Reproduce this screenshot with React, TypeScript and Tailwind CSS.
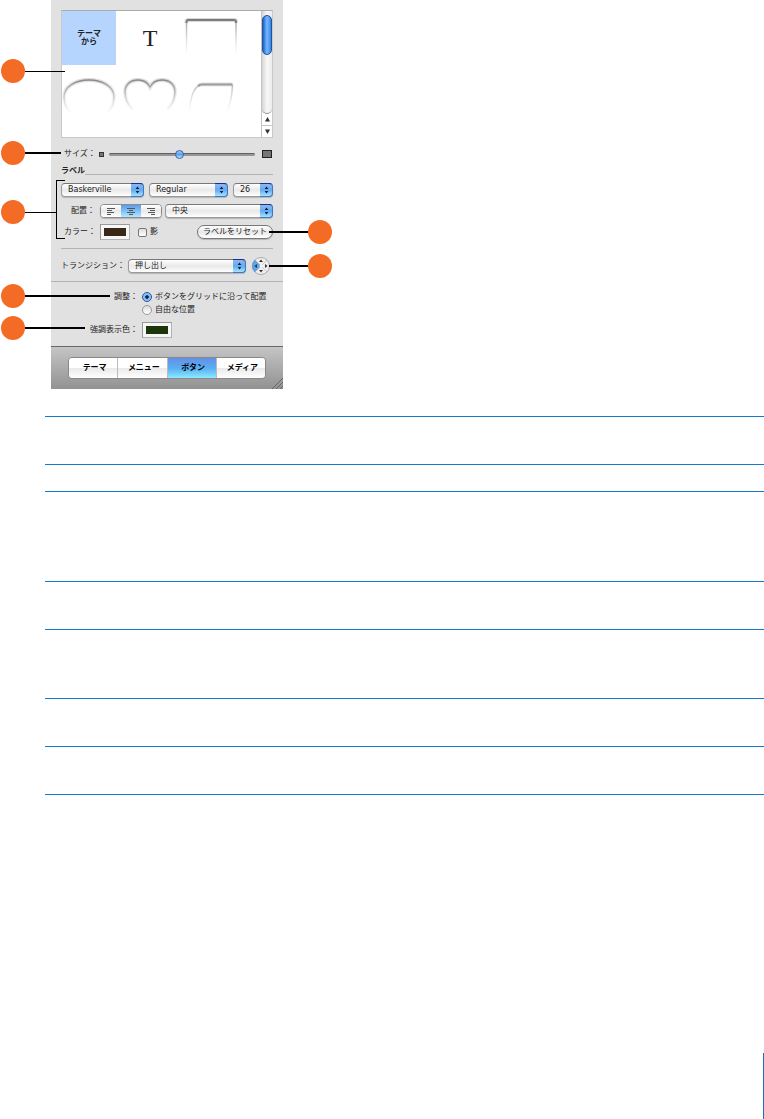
import { useId, useState } from 'react'
import type { ReactNode } from 'react'

const rowHeights = ['h-12', 'h-[27px]', 'h-[90px]', 'h-12', 'h-[69px]', 'h-12', 'h-12', 'h-px']

const tabs = ['テーマ', 'メニュー', 'ボタン', 'メディア']

// Marker and leader line for each annotated control
const callouts = [
  { side: 'left', top: 'top-[59px]', line: 'w-10 h-px' },
  { side: 'left', top: 'top-[141px]', line: 'w-9 h-[2px]' },
  { side: 'left', top: 'top-[200px]', line: 'w-8 h-px' },
  { side: 'right', top: 'top-[220px]', line: 'w-[39px] h-[2px]' },
  { side: 'right', top: 'top-[254px]', line: 'w-[39px] h-[2px]' },
  { side: 'left', top: 'top-[284px]', line: 'w-[85px] h-[2px]' },
  { side: 'left', top: 'top-[316px]', line: 'w-[60px] h-[2px]' },
]

function Callout({ side, top, line }: { side: string; top: string; line: string }) {
  const dot = <span className="size-6 shrink-0 rounded-full bg-[#f46b25]" />
  const leader = <span className={`${line} shrink-0 bg-black`} />

  if (side === 'left') {
    return (
      <div className={`pointer-events-none absolute left-px flex items-center ${top}`}>
        {dot}
        {leader}
      </div>
    )
  }
  return (
    <div className={`pointer-events-none absolute left-[269px] flex items-center ${top}`}>
      {leader}
      {dot}
    </div>
  )
}

function PopUp({ label, value, width }: { label: string; value: string; width: string }) {
  return (
    <div className={`relative h-[14px] ${width}`}>
      <select
        aria-label={label}
        defaultValue={value}
        className="block h-full w-full appearance-none rounded-[4px] border border-[#9a9a9a] border-t-[#777] bg-linear-to-b from-white via-[#e9e9e9] to-white pl-[6px] text-[8px] leading-3 text-[#222] shadow-[0_1px_1px_#b5b5b5]"
      >
        <option>{value}</option>
      </select>
      <span className="pointer-events-none absolute inset-y-0 right-0 flex w-[13px] items-center justify-center rounded-r-[4px] border border-l-0 border-[#3f78c4] border-t-[#1b2f91] bg-linear-to-b from-[#8db8f0] via-[#62a9f0] to-[#a5e4ff]">
        <svg width="5" height="8" viewBox="0 0 5 8" fill="#0b1d3a">
          <path d="M2.5 .5 4.3 3H.7zM2.5 7.5 4.3 5H.7z" />
        </svg>
      </span>
    </div>
  )
}

function ColorWell({ id, color }: { id: string; color: string }) {
  return (
    <input
      id={id}
      type="color"
      defaultValue={color}
      className="h-4 w-[30px] appearance-none border border-[#9a9a9a] border-r-[#b4b4b4] border-b-[#b4b4b4] bg-[#f6f6f6] p-[3px] [&::-webkit-color-swatch]:rounded-none [&::-webkit-color-swatch]:border-0 [&::-webkit-color-swatch-wrapper]:p-0"
    />
  )
}

// Outline that fades out downwards; `edge` is a thin side line, `d` the thick shaded top
function Shape({ d, edge }: { d: string; edge?: string }) {
  const id = useId()
  return (
    <svg viewBox="0 0 54 54" className="size-[54px]" fill="none">
      <defs>
        <linearGradient id={id} gradientUnits="userSpaceOnUse" x1="0" y1="8" x2="0" y2="46">
          <stop offset="0" stopColor="#777" />
          <stop offset=".3" stopColor="#999" stopOpacity=".8" />
          <stop offset="1" stopColor="#ccc" stopOpacity="0" />
        </linearGradient>
      </defs>
      {edge && <path d={edge} stroke={`url(#${id})`} strokeWidth="1.5" opacity=".7" />}
      <path d={d} stroke={`url(#${id})`} strokeWidth="4" opacity=".3" />
      <path d={d} stroke={`url(#${id})`} strokeWidth={edge ? 2 : 1.5} />
    </svg>
  )
}

function Gallery() {
  const cells: ReactNode[] = [
    <span className="text-center text-[8px] leading-[8px] font-bold">
      テーマ
      <br />
      から
    </span>,
    <span className="font-['Liberation_Serif',serif] text-2xl">T</span>,
    <Shape d="M2.500 12V11q0-2 2-2H50q2 0 2 2v1" edge="M2.500 11V43M52 11V43" />,
    <Shape d="M8 44C5 41 2 36 2 29C2 19 13 12 27 12S52 19 52 29C52 36 49 41 46 44" />,
    <Shape d="M10 42C5 37 2 30 2 24C2 16 8 12 15 12C21 12 25 15 27 19C29 15 33 12 39 12C46 12 52 16 52 24C52 30 49 37 44 42" />,
    <Shape d="M14 18Q16 16.500 18 16.500H48.500" edge="M5.500 46C6 31 9 20 16 17M48.500 17C48 30 46 38 42 44M5.500 46C6 31 9 20 16 17" />,
  ]

  return (
    <div className="flex h-32 border border-[#c9c9c9] border-t-[#ababab] bg-white">
      <div className="grid flex-1 grid-cols-[54px_54px_54px] content-start gap-x-[7px] gap-y-[3px]">
        {cells.map((cell, i) => (
          <button
            key={i}
            type="button"
            className={`flex h-[54px] items-center justify-center ${i === 0 ? 'bg-[#b5d5ff]' : ''}`}
          >
            {cell}
          </button>
        ))}
      </div>

      {/* Scroll bar */}
      <div className="flex w-[11px] flex-col border-l border-[#c4c4c4]">
        <div className="flex-1 rounded-b-[5px] border-b border-[#8d8d8d] bg-linear-to-r from-[#d5d5d5] via-[#f7f7f7] to-[#ececec] pt-1">
          <div className="h-10 rounded-full border border-[#24509f] bg-linear-to-r from-[#1c62c8] via-[#75baff] to-[#3486e6]" />
        </div>
        <button type="button" aria-label="上へ" className="flex h-3 items-center justify-center border-b border-[#c4c4c4]">
          <svg width="5" height="5" viewBox="0 0 5 5" fill="#333">
            <path d="M2.500 0 5 4.500H0z" />
          </svg>
        </button>
        <button type="button" aria-label="下へ" className="flex h-[11px] items-center justify-center">
          <svg width="5" height="5" viewBox="0 0 5 5" fill="#333">
            <path d="M2.500 5 0 .5H5z" />
          </svg>
        </button>
      </div>
    </div>
  )
}

function AlignButtons() {
  const lines = ['M0 .5h8M0 2.500h5M0 4.500h7M0 6.500h4', 'M0 .5h8M2 2.500h4M0 4.500h8M2 6.500h4', 'M0 .5h8M3 2.500h5M1 4.500h7M4 6.500h4']
  const names = ['左揃え', '中央揃え', '右揃え']
  return (
    <div className="mr-[3px] flex h-[14px] w-[62px] overflow-hidden rounded-[4px] border border-[#8c8c8c] shadow-[0_1px_1px_#b5b5b5]">
      {lines.map((d, i) => (
        <button
          key={d}
          type="button"
          aria-label={names[i]}
          className={`flex flex-1 items-center justify-center bg-linear-to-b ${i === 1 ? 'from-[#5f9be8] via-[#80c0f8] to-[#b1e8ff]' : 'from-white via-[#e9e9e9] to-white'}`}
        >
          <svg width="8" height="7" viewBox="0 0 8 7" stroke="#555">
            <path d={d} />
          </svg>
        </button>
      ))}
    </div>
  )
}

function DirectionPad() {
  return (
    <button type="button" aria-label="方向" className="ml-1.5 size-[18px] shrink-0">
      <svg viewBox="0 0 18 18">
        <circle cx="9" cy="9" r="8.500" fill="#efefef" stroke="#aaa" />
        <path d="M9 9 3 3a8.500 8.500 0 0 0 0 12z" fill="#5ba6ee" stroke="#3f78bd" strokeWidth=".5" />
        <path d="M3 3l12 12M15 3 3 15" stroke="#bbb" strokeWidth=".7" />
        <circle cx="9" cy="9" r="1.500" fill="#f5f5f5" />
        <path d="M9 2.500l2 2.500H7zM9 15.500l2-2.500H7zM15.500 9 13 7v4zM2.500 9 5 7v4z" fill="#333" />
      </svg>
    </button>
  )
}

function Inspector() {
  const [tab, setTab] = useState(2)

  return (
    <section className="flex w-[232px] flex-col bg-[#e1e1e1] pt-2.5">
      <div className="px-2.5">
        <Gallery />

        <div className="mt-2 flex h-4 items-center pl-[3px]">
          <label htmlFor="size" className="w-[35px] whitespace-nowrap">サイズ：</label>
          <span className="size-[5px] border border-[#333] bg-[#777]" />
          <input
            id="size"
            type="range"
            min="0"
            max="100"
            defaultValue="48"
            className="mx-[5px] h-3 min-w-0 flex-1 appearance-none bg-transparent [&::-webkit-slider-runnable-track]:h-[3px] [&::-webkit-slider-runnable-track]:rounded-full [&::-webkit-slider-runnable-track]:border-t [&::-webkit-slider-runnable-track]:border-[#606060] [&::-webkit-slider-runnable-track]:bg-[#969696] [&::-webkit-slider-thumb]:-mt-[4px] [&::-webkit-slider-thumb]:size-[9px] [&::-webkit-slider-thumb]:appearance-none [&::-webkit-slider-thumb]:rounded-full [&::-webkit-slider-thumb]:border [&::-webkit-slider-thumb]:border-[#3a62ab] [&::-webkit-slider-thumb]:bg-linear-to-b [&::-webkit-slider-thumb]:from-[#a9c9f2] [&::-webkit-slider-thumb]:via-[#5b9fec] [&::-webkit-slider-thumb]:to-[#b5eeff]"
          />
          <span className="mr-px ml-0.5 h-2 w-2.5 border border-[#222] bg-[#757575]" />
        </div>

        <div className="mt-px flex h-4 items-center">
          <h2 className="font-bold">ラベル</h2>
          <span className="mb-1 h-px flex-1 self-end bg-[#b3b3b3]" />
        </div>

        <div className="mt-1 flex justify-between">
          <PopUp label="フォント" value="Baskerville" width="w-[83px]" />
          <PopUp label="スタイル" value="Regular" width="w-[79px]" />
          <PopUp label="サイズ" value="26" width="w-10" />
        </div>

        <div className="mt-[7px] flex h-[14px] items-center">
          <span className="w-[39px] pl-2.5 whitespace-nowrap">配置：</span>
          <AlignButtons />
          <PopUp label="ラベルの位置" value="中央" width="flex-1" />
        </div>

        <div className="mt-1.5 flex h-4 items-center">
          <label htmlFor="label-color" className="w-[39px] pl-[3px] whitespace-nowrap">カラー：</label>
          <ColorWell id="label-color" color="#392718" />
          <label className="ml-2 flex items-center gap-[3px]">
            <input
              type="checkbox"
              className="size-[9px] appearance-none rounded-[2px] border border-[#777] bg-linear-to-b from-[#ddd] to-white checked:bg-[#5b9fec]"
            />
            影
          </label>
          <button
            type="button"
            className="ml-auto h-[14px] w-[76px] rounded-full border border-[#777] bg-linear-to-b from-white via-[#e8e8e8] to-white text-center leading-3 whitespace-nowrap shadow-[0_1px_1px_#b5b5b5]"
          >
            ラベルをリセット
          </button>
        </div>

        <hr className="mt-2 border-[#b3b3b3]" />

        <div className="mt-[9px] flex h-4 items-center">
          <span className="w-[67px] whitespace-nowrap">トランジション：</span>
          <PopUp label="トランジション" value="押し出し" width="w-[118px]" />
          <DirectionPad />
        </div>
      </div>

      <hr className="mt-[7px] border-[#b3b3b3]" />

      <fieldset className="mt-[9px] grid grid-cols-[91px_1fr] gap-y-px">
        <span className="h-3 pr-1 text-right leading-3">調整：</span>
        {['ボタンをグリッドに沿って配置', '自由な位置'].map((text, i) => (
          <label key={text} className="col-start-2 flex h-3 items-center gap-[3px] whitespace-nowrap">
            <input
              type="radio"
              name="placement"
              defaultChecked={i === 0}
              className="size-[10px] appearance-none rounded-full border border-[#999] bg-linear-to-b from-[#ddd] to-white checked:border-[#28509b] checked:bg-radial checked:from-[#0d2345] checked:from-25% checked:via-[#76b5f5] checked:via-35% checked:to-[#a5dcff]"
            />
            {text}
          </label>
        ))}
      </fieldset>

      <div className="mt-1.5 grid h-4 grid-cols-[91px_1fr] items-center">
        <label htmlFor="highlight" className="pr-1 text-right">強調表示色：</label>
        <ColorWell id="highlight" color="#1c350b" />
      </div>

      <footer className="relative mt-2 flex h-[43px] justify-center border-t border-[#666] bg-linear-to-b from-[#c5c5c5] to-[#929292] pt-2.5">
        <nav className="flex h-[22px] w-[198px] overflow-hidden rounded-[4px] border border-[#888]">
          {tabs.map((name, i) => (
            <button
              key={name}
              type="button"
              onClick={() => setTab(i)}
              className={`flex-1 bg-linear-to-b pl-[3px] font-bold whitespace-nowrap text-black ${i > 0 ? 'border-l border-[#bbb]' : ''} ${tab === i ? 'from-[#648fe5] via-[#58adf3] to-[#8ceaff]' : 'from-white from-50% via-[#e9e9e9] via-50% to-white'}`}
            >
              {name}
            </button>
          ))}
        </nav>
        <svg width="11" height="11" viewBox="0 0 11 11" stroke="#666" className="absolute right-0 bottom-0">
          <path d="M0 11 11 0M4 11l7-7M8 11l3-3" />
        </svg>
      </footer>
    </section>
  )
}

export default function App() {
  return (
    <main className="flex min-h-screen flex-col bg-white font-['DejaVu_Sans','Noto_Sans_CJK_JP',sans-serif] text-[8px] leading-3 text-[#222]">
      <div className="relative pl-[51px]">
        <Inspector />
        {callouts.map((c) => (
          <Callout key={c.top} {...c} />
        ))}
        {/* Bracket round the label controls */}
        <span className="pointer-events-none absolute top-[180px] left-14 h-[59px] w-[9px] border border-r-0 border-black" />
      </div>

      <div className="mt-[27px] ml-[45px]">
        {rowHeights.map((height, i) => (
          <div key={i} className={`border-t border-[#1579c8] ${height}`} />
        ))}
      </div>

      <div className="mt-auto h-[66px] w-px self-end bg-[#1f6fae]" />
    </main>
  )
}
